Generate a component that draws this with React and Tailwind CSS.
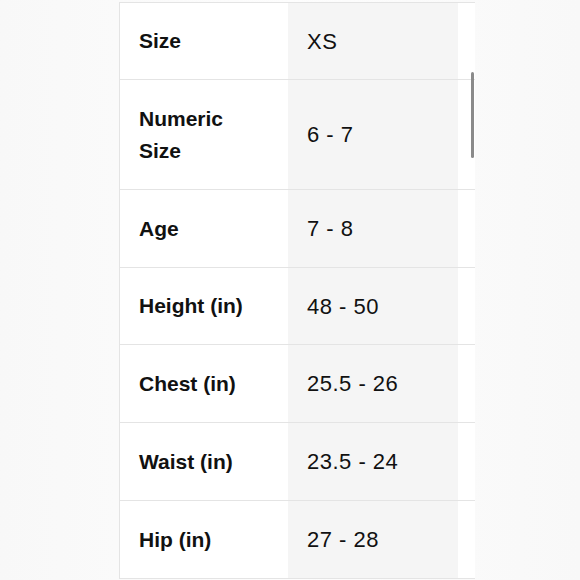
const rows = [
  { label: 'Size', value: 'XS', h: 'h-[77px]' },
  { label: 'Numeric Size', value: '6 - 7', h: 'h-[110px]', wrap: true },
  { label: 'Age', value: '7 - 8', h: 'h-[78px]' },
  { label: 'Height (in)', value: '48 - 50', h: 'h-[77px]' },
  { label: 'Chest (in)', value: '25.5 - 26', h: 'h-[78px]' },
  { label: 'Waist (in)', value: '23.5 - 24', h: 'h-[78px]' },
  { label: 'Hip (in)', value: '27 - 28', h: 'h-[78px]' },
]

export default function App() {
  return (
    <div className="w-[580px] h-[580px] overflow-hidden bg-gradient-to-r from-[#f8f8f8] via-[#fdfdfd] to-[#f8f8f8] pt-[2px] pl-[119px] text-[#111]" style={{ fontFamily: '"Liberation Sans", Arial, sans-serif' }}>
      <div className="relative w-[356px] border-l border-t border-[#e4e4e4] bg-white overflow-hidden">
        {rows.map((r) => (
          <div key={r.label} className={`flex border-b border-[#e4e4e4] ${r.h}`}>
            <div className="w-[168px] shrink-0 flex items-center pl-[19px] pr-4">
              <span className={`text-[21px] font-bold leading-[32px] ${r.wrap ? 'w-[100px]' : ''}`}>{r.label}</span>
            </div>
            <div className="w-[170px] shrink-0 flex items-center bg-[#f5f5f5] pl-[19px]">
              <span className="text-[22px] tracking-[0.5px]">{r.value}</span>
            </div>
            <div className="flex-1 bg-white" />
          </div>
        ))}
        <div className="absolute left-[351px] top-[69px] w-[3px] h-[86px] rounded-full bg-[#8a8a8a]" />
      </div>
    </div>
  )
}
